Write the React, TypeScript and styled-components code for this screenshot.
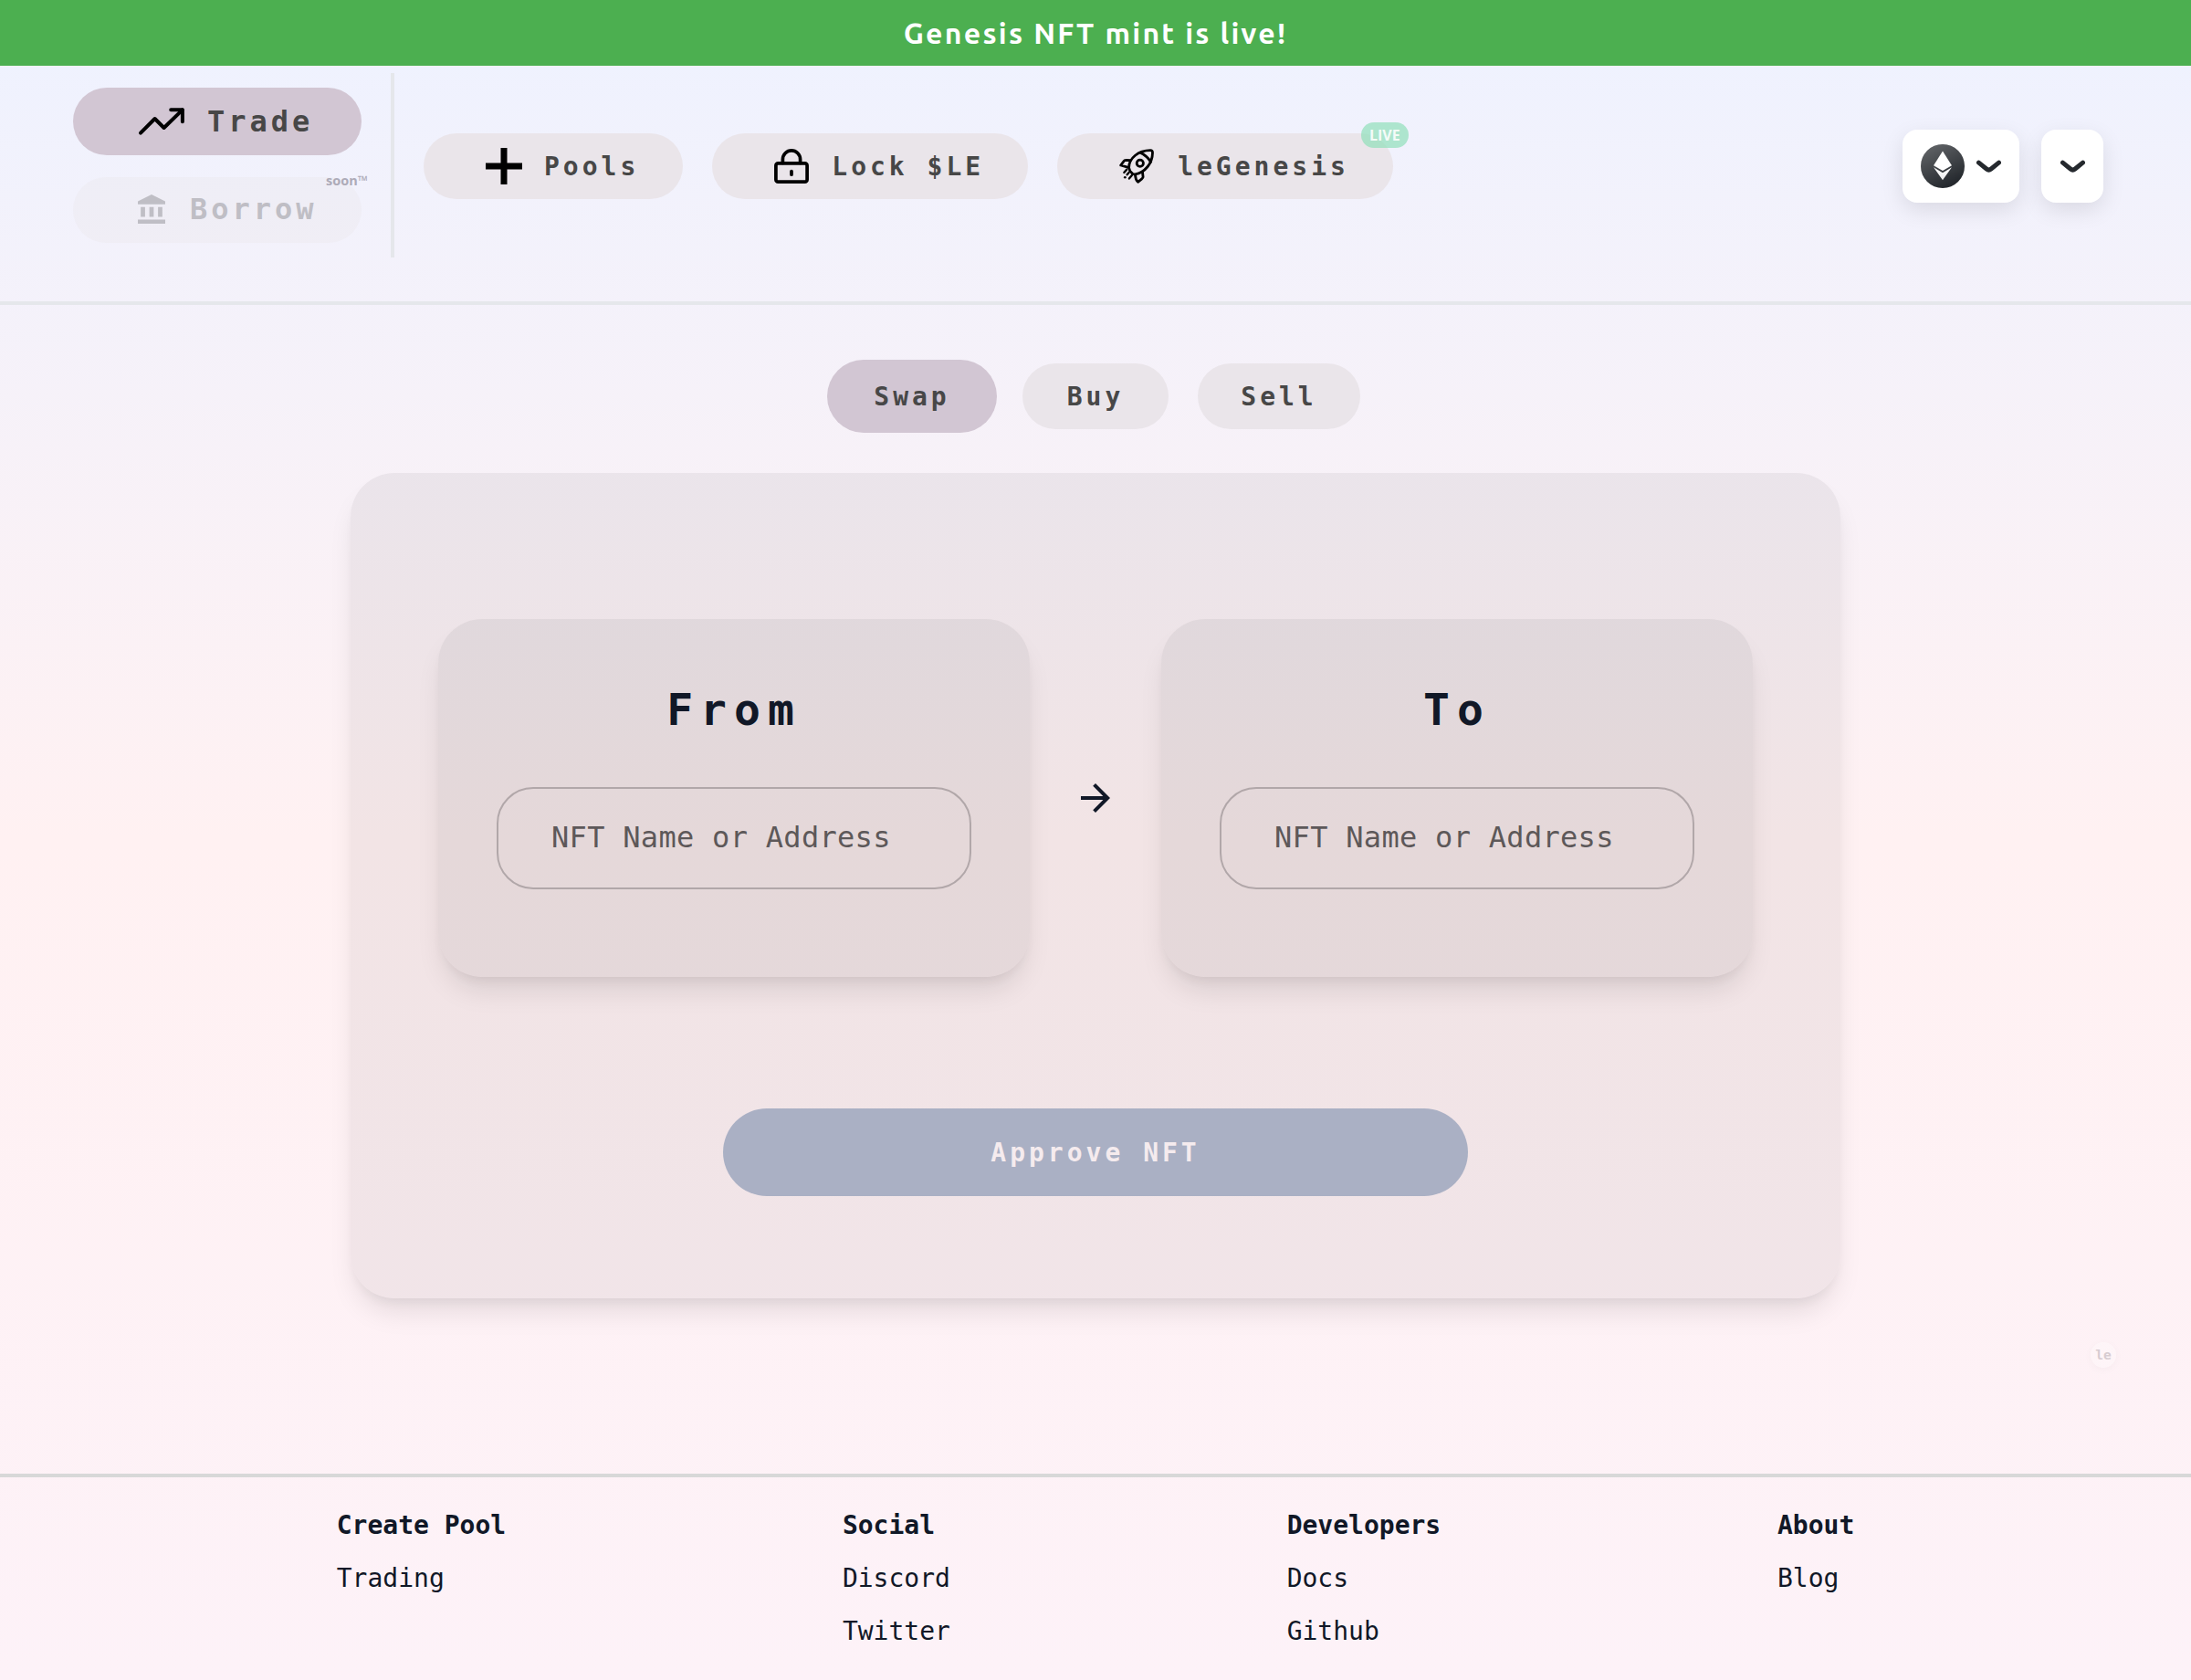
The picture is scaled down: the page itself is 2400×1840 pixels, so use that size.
import React from "react";
import styled, { createGlobalStyle } from "styled-components";

const mono = `"DejaVu Sans Mono", "Liberation Mono", monospace`;
const display = `Ubuntu, "Noto Sans", sans-serif`;
const sans = `"Open Sans", "Noto Sans", sans-serif`;

const GlobalStyle = createGlobalStyle`
  *, *::before, *::after { box-sizing: border-box; }
  body { margin: 0; }
`;

const Page = styled.div`
  display: flex;
  flex-direction: column;
  width: 100%;
  height: 1840px;
  overflow: hidden;
  color: #111827;
  font-family: ${mono};
  background: linear-gradient(to bottom, #eef2ff, #fff1f2, #fdf2f8);
`;

const Banner = styled.div`
  display: flex;
  align-items: center;
  justify-content: center;
  flex: none;
  height: 72px;
  background: #4caf50;
  color: #fff;
  font: 700 32px/44px ${display};
  letter-spacing: 2.25px;
`;

const Header = styled.header`
  display: flex;
  align-items: center;
  flex: none;
  height: 262px;
  padding: 8px 96px 46px 80px;
  border-bottom: 4px solid #e5e7eb;
`;

const ModeColumn = styled.div`
  display: flex;
  flex-direction: column;
  align-self: flex-start;
  gap: 24px;
  width: 316px;
  margin-top: 16px;
`;

const Divider = styled.div`
  align-self: flex-start;
  flex: none;
  width: 4px;
  height: 202px;
  margin: 0 32px;
  background: #e5e7eb;
`;

const ModeButton = styled.button<{ $active?: boolean; $gap: number; $left: number }>`
  position: relative;
  display: flex;
  align-items: center;
  gap: ${(p) => p.$gap}px;
  height: ${(p) => (p.$active ? 74 : 72)}px;
  padding: 0 0 ${(p) => (p.$active ? 0 : 2)}px ${(p) => p.$left}px;
  border: 0;
  border-radius: 40px;
  background: ${(p) => (p.$active ? "#d2c6d3" : "rgba(234, 229, 234, 0.32)")};
  color: ${(p) => (p.$active ? "#474747" : "#bfbec5")};
  font: 700 32px/48px ${mono};
  letter-spacing: 4px;
`;

const SoonTag = styled.span`
  position: absolute;
  top: -8px;
  right: -7px;
  color: #adabb8;
  font: 700 14.5px/24px ${sans};
  letter-spacing: 0;
`;

const NavRow = styled.nav`
  display: flex;
  gap: 32px;
`;

const NavButton = styled.button<{ $gap: number }>`
  position: relative;
  display: flex;
  align-items: center;
  gap: ${(p) => p.$gap}px;
  height: 72px;
  padding: 0 48px 0 68px;
  border: 0;
  border-radius: 36px;
  background: #eae5ea;
  color: #474747;
  font: 700 28px/41px ${mono};
  letter-spacing: 4px;
  white-space: nowrap;
`;

const LiveTag = styled.span`
  position: absolute;
  top: -12px;
  right: -17px;
  display: flex;
  align-items: center;
  justify-content: center;
  width: 52px;
  height: 28px;
  border-radius: 14px;
  background: rgba(134, 222, 180, 0.64);
  color: #f4fbf8;
  font: 700 16px/22px ${sans};
  letter-spacing: 0;
`;

const WalletRow = styled.div`
  display: flex;
  gap: 24px;
  margin-left: auto;
`;

const WalletButton = styled.button`
  display: flex;
  align-items: center;
  gap: 12px;
  height: 80px;
  padding: 0 20px;
  border: 0;
  border-radius: 16px;
  background: #fff;
  color: #25292e;
  box-shadow: 0 8px 24px rgba(0, 0, 0, 0.1);
`;

const Main = styled.main`
  display: flex;
  flex-direction: column;
  align-items: center;
  flex: none;
  height: 1280px;
  padding-top: 60px;
`;

const Tabs = styled.div`
  display: flex;
  align-items: center;
  height: 80px;
  padding-right: 4px;
`;

const Tab = styled.button<{ $width: number; $active?: boolean }>`
  width: ${(p) => p.$width}px;
  height: ${(p) => (p.$active ? 80 : 72)}px;
  margin-right: ${(p) => (p.$active ? 28 : 32)}px;
  padding: 0;
  border: 0;
  border-radius: 40px;
  background: ${(p) => (p.$active ? "#d2c6d3" : "#eae5ea")};
  color: #474747;
  font: 700 28px/41px ${mono};
  letter-spacing: 4px;

  &:last-child {
    margin-right: 0;
  }
`;

const lift = `0 20px 30px -6px rgba(0, 0, 0, 0.1), 0 8px 12px -4px rgba(0, 0, 0, 0.05)`;

const SwapCard = styled.section`
  display: flex;
  flex-direction: column;
  align-items: center;
  width: 1632px;
  height: 904px;
  margin-top: 44px;
  padding-top: 160px;
  border-radius: 48px;
  background: rgba(0, 0, 0, 0.05);
  box-shadow: ${lift};
`;

const Sides = styled.div`
  display: flex;
  align-items: center;
  justify-content: space-between;
  width: 1440px;
`;

const Side = styled.div`
  display: flex;
  flex-direction: column;
  align-items: center;
  width: 648px;
  height: 392px;
  padding-top: 64px;
  border-radius: 48px;
  background: rgba(0, 0, 0, 0.05);
  box-shadow: ${lift};
`;

const SideTitle = styled.h2`
  margin: 0 0 50px;
  font: 700 48px/70px ${mono};
  letter-spacing: 8px;
`;

const NftInput = styled.input`
  width: 520px;
  height: 112px;
  padding: 0 40px 2px 58px;
  border: 2px solid #b1a7a9;
  border-radius: 40px;
  outline: 0;
  background: transparent;
  font: 400 32px/48px ${mono};
  letter-spacing: 0.3px;

  &::placeholder {
    color: #5d5859;
    opacity: 1;
  }
`;

const ApproveButton = styled.button`
  width: 816px;
  height: 96px;
  margin-top: 144px;
  padding: 0;
  border: 0;
  border-radius: 48px;
  background: #aab0c4;
  color: #f5ebee;
  font: 700 28px/41px ${mono};
  letter-spacing: 4px;
`;

const Footer = styled.footer`
  display: flex;
  justify-content: space-evenly;
  flex: 1;
  padding-top: 24px;
  border-top: 4px solid #d8d8d8;
`;

const FooterColumn = styled.div`
  display: flex;
  flex-direction: column;
  font-size: 28px;
  line-height: 58px;
`;

const FooterTitle = styled.strong`
  font-weight: 700;
`;

const FooterLink = styled.a`
  color: inherit;
  text-decoration: none;
`;

const FloatingMark = styled.div`
  position: absolute;
  top: 1470px;
  left: 2290px;
  display: flex;
  align-items: center;
  justify-content: center;
  width: 28px;
  height: 28px;
  border-radius: 50%;
  background: rgba(255, 255, 255, 0.25);
  box-shadow: 0 2px 10px rgba(0, 0, 0, 0.03);
  color: #d7ccd1;
  font: 700 14.5px/20px ${mono};
`;

const TrendIcon = () => (
  <svg width="52" height="32" viewBox="0 0 52 32" fill="none" stroke="#000" strokeWidth="4" strokeLinecap="round" strokeLinejoin="round">
    <path d="M3 28.6 18.6 13 28.6 23 48.8 3.4" />
    <path d="M36.2 3.2h12.7v13" />
  </svg>
);

const BankIcon = () => (
  <svg width="30" height="32" viewBox="2 1 19 21" fill="currentColor" preserveAspectRatio="none">
    <path d="M4 10v7h3v-7H4zm6 0v7h3v-7h-3zM2 22h19v-3H2v3zm14-12v7h3v-7h-3zm-4.5-9L2 6v2h19V6l-9.5-5z" />
  </svg>
);

const PlusIcon = () => (
  <svg width="40" height="40" viewBox="0 0 40 40" stroke="#000" strokeWidth="7">
    <path d="M20 0v40M0 20h40" />
  </svg>
);

const LockIcon = () => (
  <svg width="38" height="38" viewBox="0 0 38 38" fill="none" stroke="#000" strokeWidth="3.7" strokeLinecap="round">
    <rect x="1.9" y="15.9" width="34.2" height="20.2" rx="2.4" />
    <path d="M9.4 15.5v-4a9.6 9.6 0 0 1 19.2 0v4M19 24.6v3.6" />
  </svg>
);

const RocketIcon = () => (
  <svg width="38" height="38" viewBox="81 128 115 114" fill="none" stroke="#000" strokeWidth="8.5" strokeLinecap="round" strokeLinejoin="round">
    <path d="M117 202 113 190C113 158 145 133 184 132.5Q191.500 132.500 191.500 140C191 176 166 206 134 212L126 211Z" />
    <path d="M151 140Q172 150 186 171" />
    <circle cx="150" cy="175" r="11" />
    <path d="M118 166 104 165Q98 165 95 170L86 182 111 189" />
    <path d="M158 204 160 221Q159 224 156 227L143 237.500Q135 230 134 214" />
    <path d="M106 196 97 206M113 206 107 213M123 215 114 226" strokeWidth="7" />
    <path d="M100 222h.1" strokeWidth="8" />
  </svg>
);

const EthIcon = () => (
  <svg width="48" height="48" viewBox="0 0 28 28" fill="none">
    <defs>
      <linearGradient id="ethSheen" x1="0" y1="0" x2="14" y2="28" gradientUnits="userSpaceOnUse">
        <stop stopColor="#fff" />
        <stop offset="1" stopColor="#fff" stopOpacity="0" />
      </linearGradient>
      <linearGradient id="ethBase" x1="14" y1="14.77" x2="14" y2="22.96" gradientUnits="userSpaceOnUse">
        <stop stopColor="#fff" />
        <stop offset="1" stopColor="#fff" stopOpacity="0.9" />
      </linearGradient>
    </defs>
    <circle cx="14" cy="14" r="14" fill="#25292e" />
    <circle cx="14" cy="14" r="14" fill="url(#ethSheen)" fillOpacity="0.3" />
    <path fill="url(#ethBase)" d="M8.19 14.77 14 18.21l5.8-3.44-5.8 8.19-5.81-8.19Z" />
    <path fill="#fff" d="m14 16.93-5.81-3.44L14 4.34l5.81 9.15L14 16.93Z" />
  </svg>
);

const ChevronIcon = () => (
  <svg width="28" height="14" viewBox="0 0 14 7" fill="none">
    <path
      d="M12.75 1.54001L8.51647 5.0038C7.77974 5.60658 6.72026 5.60658 5.98352 5.0038L1.75 1.54001"
      stroke="currentColor"
      strokeWidth="2.5"
      strokeLinecap="round"
      strokeLinejoin="round"
    />
  </svg>
);

const ArrowIcon = () => (
  <svg width="48" height="48" viewBox="0 0 24 24" fill="currentColor">
    <path d="m12 4-1.41 1.41L16.17 11H4v2h12.17l-5.58 5.59L12 20l8-8z" />
  </svg>
);

const footerColumns = [
  { title: "Create Pool", links: ["Trading"] },
  { title: "Social", links: ["Discord", "Twitter"] },
  { title: "Developers", links: ["Docs", "Github"] },
  { title: "About", links: ["Blog"] },
];

const TokenSide = ({ title }: { title: string }) => (
  <Side>
    <SideTitle>{title}</SideTitle>
    <NftInput placeholder="NFT Name or Address" />
  </Side>
);

export default function App() {
  return (
    <>
      <GlobalStyle />
      <Page>
        <Banner>Genesis NFT mint is live!</Banner>
        <Header>
          <ModeColumn>
            <ModeButton $active $gap={24} $left={71}>
              <TrendIcon />
              Trade
            </ModeButton>
            <ModeButton $gap={27} $left={71}>
              <BankIcon />
              Borrow
              <SoonTag>soon™</SoonTag>
            </ModeButton>
          </ModeColumn>
          <Divider />
          <NavRow>
            <NavButton $gap={24}>
              <PlusIcon />
              Pools
            </NavButton>
            <NavButton $gap={25}>
              <LockIcon />
              Lock $LE
            </NavButton>
            <NavButton $gap={26}>
              <RocketIcon />
              leGenesis
              <LiveTag>LIVE</LiveTag>
            </NavButton>
          </NavRow>
          <WalletRow>
            <WalletButton>
              <EthIcon />
              <ChevronIcon />
            </WalletButton>
            <WalletButton>
              <ChevronIcon />
            </WalletButton>
          </WalletRow>
        </Header>
        <Main>
          <Tabs>
            <Tab $active $width={186}>Swap</Tab>
            <Tab $width={160}>Buy</Tab>
            <Tab $width={178}>Sell</Tab>
          </Tabs>
          <SwapCard>
            <Sides>
              <TokenSide title="From" />
              <ArrowIcon />
              <TokenSide title="To" />
            </Sides>
            <ApproveButton>Approve NFT</ApproveButton>
          </SwapCard>
        </Main>
        <Footer>
          {footerColumns.map((column) => (
            <FooterColumn key={column.title}>
              <FooterTitle>{column.title}</FooterTitle>
              {column.links.map((link) => (
                <FooterLink key={link}>{link}</FooterLink>
              ))}
            </FooterColumn>
          ))}
        </Footer>
        <FloatingMark>le</FloatingMark>
      </Page>
    </>
  );
}
